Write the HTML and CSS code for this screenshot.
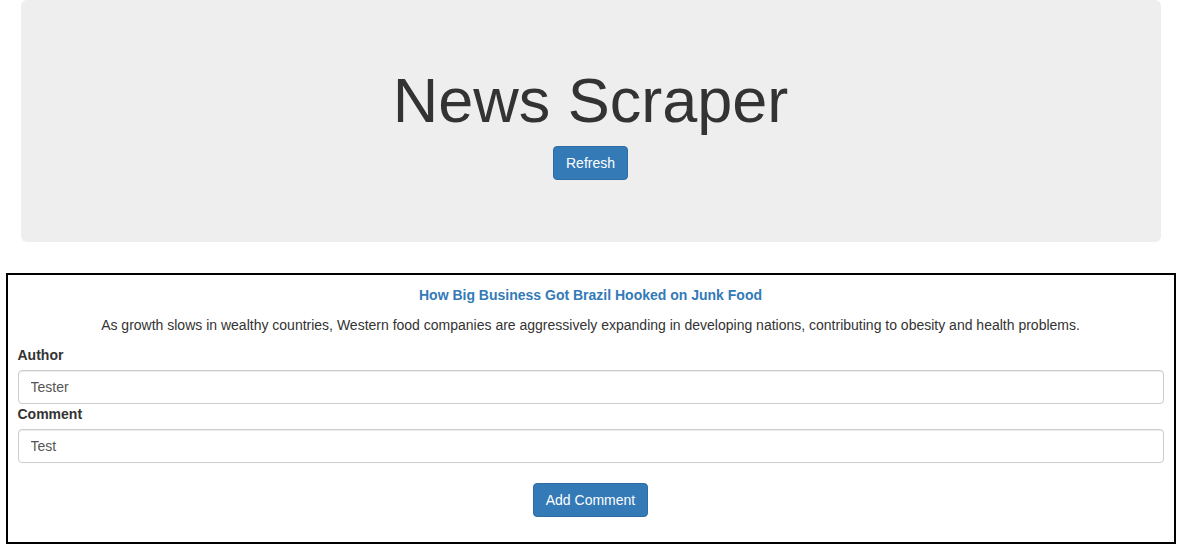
FILE: index.html
```html
<!DOCTYPE html>
<html>
<head>
<meta charset="utf-8">
<title>News Scraper</title>
<link rel="stylesheet" href="styles.css">
</head>
<body>
<div class="container">
  <div class="jumbotron">
    <h1 class="title">News Scraper</h1>
    <button class="btn">Refresh</button>
  </div>
  <div class="article">
    <p class="headline"><a href="#">How Big Business Got Brazil Hooked on Junk Food</a></p>
    <p class="summary">As growth slows in wealthy countries, Western food companies are aggressively expanding in developing nations, contributing to obesity and health problems.</p>
    <form class="comment-form">
      <label class="label">Author</label>
      <input class="input" type="text" value="Tester">
      <label class="label">Comment</label>
      <input class="input" type="text" value="Test">
      <div class="actions">
        <button type="button" class="btn">Add Comment</button>
      </div>
    </form>
  </div>
</div>
</body>
</html>
```
FILE: styles.css
```css
* { box-sizing: border-box; }
html, body { margin: 0; padding: 0; }
body {
  font-family: "Liberation Sans", Arial, sans-serif;
  font-size: 14px;
  line-height: 20px;
  color: #333;
  background: #fff;
}
.container {
  width: 1170px;
  margin: 0 auto;
}
.jumbotron {
  margin: 0 15px;
  background: #eee;
  border-radius: 6px;
  padding: 66px 60px 62px;
  text-align: center;
}
.title {
  margin: 0 0 11px;
  font-size: 63px;
  font-weight: 500;
  line-height: 69px;
  color: #333;
}
.btn {
  display: inline-block;
  height: 34px;
  padding: 6px 12px;
  font-family: inherit;
  font-size: 14px;
  line-height: 20px;
  color: #fff;
  background: #337ab7;
  border: 1px solid #2e6da4;
  border-radius: 4px;
  cursor: pointer;
}
.article {
  margin-top: 31px;
  border: 2px solid #000;
  padding: 10px 10px 25px;
}
.headline {
  margin: 0 0 10px;
  text-align: center;
  font-weight: bold;
}
.headline a {
  color: #337ab7;
  text-decoration: none;
}
.summary {
  margin: 0 0 10px;
  text-align: center;
}
.comment-form {
  display: flex;
  flex-direction: column;
  align-items: stretch;
  margin: 0;
}
.label {
  font-weight: bold;
  margin-bottom: 5px;
  align-self: flex-start;
}
.input {
  display: block;
  width: 100%;
  height: 34px;
  padding: 6px 12px;
  font-family: inherit;
  font-size: 14px;
  line-height: 20px;
  color: #555;
  background: #fff;
  border: 1px solid #ccc;
  border-radius: 4px;
  box-shadow: inset 0 1px 1px rgba(0,0,0,.075);
}
.actions {
  margin-top: 20px;
  text-align: center;
}
```
